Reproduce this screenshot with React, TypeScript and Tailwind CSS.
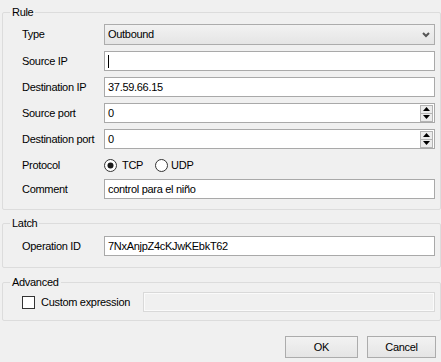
const Box = ({ children }: { children?: React.ReactNode }) => (
  <div className="h-[20px] bg-white border border-[#a9a9a9] pl-[3px] flex items-center whitespace-nowrap">{children}</div>
);

const Spin = ({ value }: { value: string }) => (
  <div className="h-[20px] bg-white border border-[#a9a9a9] pl-[3px] pr-px flex items-center justify-between">
    <span>{value}</span>
    <div className="flex flex-col w-[13px] h-[17px] border border-[#b4b4b4] bg-[#ececec]">
      <div className="flex-1 flex items-center justify-center border-b border-[#b4b4b4]">
        <svg width="7" height="4" viewBox="0 0 7 4"><path d="M3.5 0 L7 4 L0 4 Z" fill="#000" /></svg>
      </div>
      <div className="flex-1 flex items-center justify-center">
        <svg width="7" height="4" viewBox="0 0 7 4"><path d="M0 0 L7 0 L3.5 4 Z" fill="#000" /></svg>
      </div>
    </div>
  </div>
);

const Radio = ({ checked }: { checked?: boolean }) => (
  <svg width="13" height="13" viewBox="0 0 13 13">
    <circle cx="6.5" cy="6.5" r="6" fill="#fff" stroke="#333" />
    {checked && <circle cx="6.5" cy="6.5" r="3" fill="#1a1a1a" />}
  </svg>
);

const Row = ({ label, children, className = "" }: { label: string; children: React.ReactNode; className?: string }) => (
  <div className={`grid grid-cols-[82px_1fr] items-center ${className}`}>
    <span>{label}</span>
    {children}
  </div>
);

const Group = ({ title, children, className = "" }: { title: string; children: React.ReactNode; className?: string }) => (
  <fieldset className={`border border-[#dcdcdc] rounded-[2px] pl-[19px] pr-[5px] ${className}`}>
    <legend className="-ml-[12px] px-[2px] leading-[14px]">{title}</legend>
    {children}
  </fieldset>
);

export default function App() {
  return (
    <div className="w-[441px] h-[362px] bg-[#f0f0f0] text-black text-[11px] tracking-[-0.3px] font-['Liberation_Sans',Arial,sans-serif] pl-[2px] pt-[5px] overflow-hidden">
      <Group title="Rule" className="pb-[10px]">
        <Row label="Type" className="mt-[5px]">
          <div className="h-[21px] border border-[#acacac] bg-gradient-to-b from-[#f2f2f2] to-[#e5e5e5] pl-[3px] pr-[4px] flex items-center justify-between">
            <span>Outbound</span>
            <svg width="8" height="6" viewBox="0 0 8 6"><path d="M1 1 L4 4 L7 1" fill="none" stroke="#555" strokeWidth="2" /></svg>
          </div>
        </Row>
        <Row label="Source IP" className="mt-[6px]">
          <Box><span className="w-px h-[13px] bg-black" /></Box>
        </Row>
        <Row label="Destination IP" className="mt-[6px]">
          <Box>37.59.66.15</Box>
        </Row>
        <Row label="Source port" className="mt-[6px]">
          <Spin value="0" />
        </Row>
        <Row label="Destination port" className="mt-[6px]">
          <Spin value="0" />
        </Row>
        <Row label="Protocol" className="mt-[6px] h-[20px]">
          <div className="flex items-center">
            <Radio checked />
            <span className="ml-[5px]">TCP</span>
            <span className="ml-[12px] flex"><Radio /></span>
            <span className="ml-[3px]">UDP</span>
          </div>
        </Row>
        <Row label="Comment" className="mt-[4px]">
          <Box>control para el niño</Box>
        </Row>
      </Group>
      <Group title="Latch" className="mt-[6px] pb-[11px]">
        <Row label="Operation ID" className="mt-[6px]">
          <Box>7NxAnjpZ4cKJwKEbkT62</Box>
        </Row>
      </Group>
      <Group title="Advanced" className="mt-[7px] pb-[8px]">
        <div className="grid grid-cols-[121px_1fr] items-center mt-[3px]">
          <div className="flex items-center">
            <span className="w-[13px] h-[13px] border border-[#333] bg-white" />
            <span className="ml-[6px]">Custom expression</span>
          </div>
          <div className="h-[20px] border border-[#d9d9d9] bg-[#f0f0f0] shadow-[inset_0_0_0_1px_#fafafa]" />
        </div>
      </Group>
      <div className="flex justify-end gap-[9px] pr-[5px] mt-[15px]">
        <button className="w-[73px] h-[22px] border border-[#acacac] bg-gradient-to-b from-[#f2f2f2] to-[#e5e5e5]">OK</button>
        <button className="w-[69px] h-[22px] border border-[#acacac] bg-gradient-to-b from-[#f2f2f2] to-[#e5e5e5]">Cancel</button>
      </div>
    </div>
  );
}
